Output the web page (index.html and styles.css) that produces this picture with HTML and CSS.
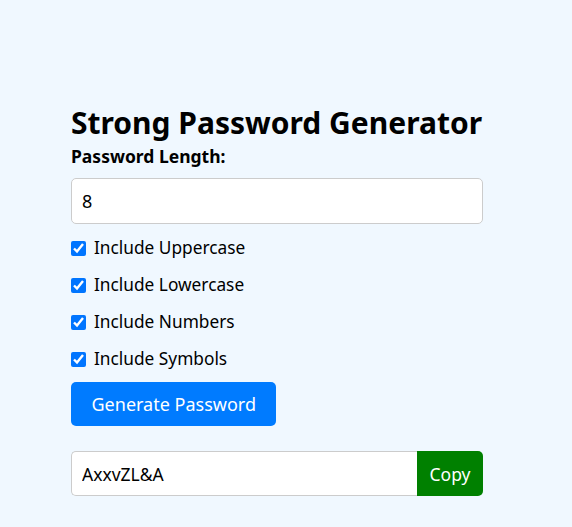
FILE: index.html
```html
<!DOCTYPE html>
<html lang="en">
<head>
<meta charset="utf-8">
<title>Strong Password Generator</title>
<link rel="stylesheet" href="styles.css">
</head>
<body>
<main class="container">
  <h1 class="title">Strong Password Generator</h1>
  <label class="field-label" for="length">Password Length:</label>
  <input class="text-input" id="length" type="number" value="8">
  <div class="options">
    <label class="option"><input type="checkbox" class="check" checked> Include Uppercase</label>
    <label class="option"><input type="checkbox" class="check" checked> Include Lowercase</label>
    <label class="option"><input type="checkbox" class="check" checked> Include Numbers</label>
    <label class="option"><input type="checkbox" class="check" checked> Include Symbols</label>
  </div>
  <button class="generate" type="button">Generate Password</button>
  <div class="output-group">
    <input class="output" type="text" value="AxxvZL&amp;A" readonly>
    <button class="copy" type="button">Copy</button>
  </div>
</main>
</body>
</html>
```
FILE: styles.css
```css
html, body {
  margin: 0;
  padding: 0;
}
body {
  background: #f0f8ff;
  font-family: "Noto Sans", sans-serif;
  font-size: 17.4px;
  color: #000;
}
.container {
  width: 412px;
  margin-left: 71px;
  padding-top: 105px;
  display: flex;
  flex-direction: column;
}
.title {
  font-size: 30px;
  font-weight: 700;
  line-height: 36px;
  white-space: nowrap;
  margin: 0 0 3px;
}
.field-label {
  font-weight: 700;
  font-size: 17.5px;
  line-height: 24px;
  margin-bottom: 10px;
}
.text-input {
  box-sizing: border-box;
  height: 46px;
  padding: 10px 10px;
  border: 1px solid #ccc;
  border-radius: 5px;
  font: 18px "Noto Sans", sans-serif;
  background: #fff;
  outline: none;
  width: 100%;
}
.options {
  display: flex;
  flex-direction: column;
  gap: 13px;
  margin-top: 12px;
}
.option {
  display: flex;
  align-items: center;
  gap: 8px;
  font-size: 17.3px;
  line-height: 24px;
}
.check {
  width: 15px;
  height: 15px;
  margin: 0;
}
.generate {
  align-self: flex-start;
  margin-top: 11px;
  height: 44px;
  padding: 0 20.5px;
  background: #007bff;
  color: #fff;
  border: none;
  border-radius: 5px;
  font: 18px "Noto Sans", sans-serif;
}
.output-group {
  display: flex;
  margin-top: 25px;
  height: 45px;
}
.output {
  flex: 1;
  min-width: 0;
  box-sizing: border-box;
  height: 100%;
  padding: 0 10px;
  border: 1px solid #ccc;
  border-right: none;
  border-radius: 5px 0 0 5px;
  font: 17.5px "Noto Sans", sans-serif;
  background: #fff;
  outline: none;
}
.copy {
  width: 66px;
  height: 100%;
  background: #008000;
  color: #fff;
  border: none;
  border-radius: 0 5px 5px 0;
  font: 17.5px "Noto Sans", sans-serif;
}
```
